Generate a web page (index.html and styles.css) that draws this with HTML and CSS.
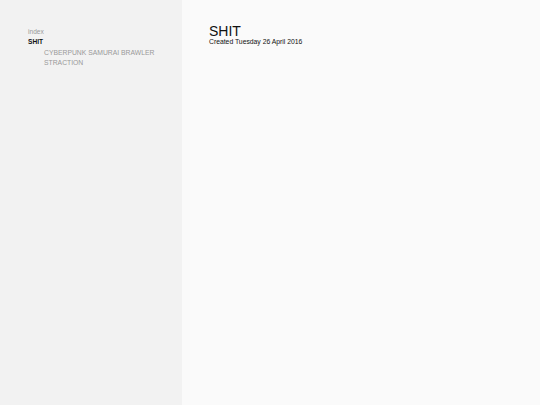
FILE: index.html
```html
<!DOCTYPE html>
<html>
<head>
<meta charset="utf-8">
<link rel="stylesheet" href="styles.css">
</head>
<body>
<div class="layout">
  <nav class="sidebar">
    <ul class="nav">
      <li class="nav-item">index</li>
      <li class="nav-item current">SHIT
        <ul class="subnav">
          <li class="sub-item">CYBERPUNK SAMURAI BRAWLER</li>
          <li class="sub-item">STRACTION</li>
        </ul>
      </li>
    </ul>
  </nav>
  <main class="content">
    <h1 class="title">SHIT</h1>
    <div class="meta">Created Tuesday 26 April 2016</div>
  </main>
</div>
</body>
</html>
```

FILE: styles.css
```css
html, body {
  margin: 0;
  padding: 0;
  height: 100%;
}
body {
  font-family: "Liberation Sans", Arial, sans-serif;
  background: #fafafa;
  color: #222;
}
.layout {
  display: flex;
  min-height: 100%;
}
.sidebar {
  width: 182px;
  flex: 0 0 182px;
  background: #f2f2f2;
  padding: 27px 0 0 28px;
  box-sizing: border-box;
}
.nav, .subnav {
  list-style: none;
  margin: 0;
  padding: 0;
}
.nav-item {
  font-size: 6.6px;
  line-height: 10px;
  color: #999;
}
.nav-item.current {
  font-weight: bold;
  color: #111;
}
.subnav {
  padding-left: 16px;
}
.sub-item {
  font-size: 6.8px;
  line-height: 10px;
  font-weight: normal;
  color: #999;
  padding-top: 1px;
  margin-bottom: -1px;
}
.content {
  flex: 1;
  padding: 25px 0 0 27px;
}
.title {
  margin: 0;
  font-size: 14px;
  font-weight: normal;
  line-height: 13px;
  color: #111;
}
.meta {
  font-size: 6.8px;
  line-height: 8px;
  color: #111;
}
```
